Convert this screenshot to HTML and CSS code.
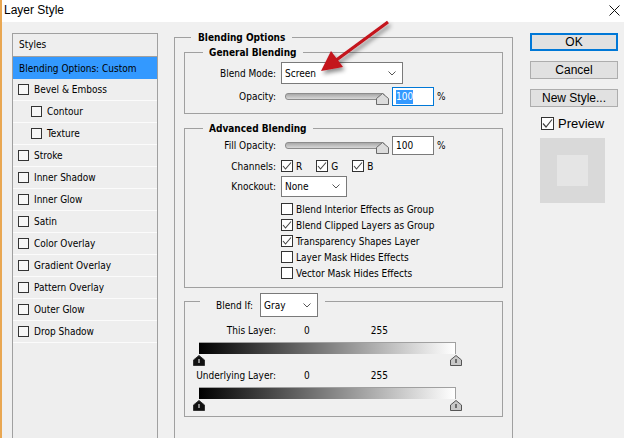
FILE: index.html
```html
<!DOCTYPE html>
<html lang="en">
<head>
  <meta charset="UTF-8">
  <title>Layer Style</title>
  <link rel="stylesheet" href="styles.css">
</head>
<body>
  <div class="window">

    <!-- Title bar -->
    <div class="titlebar">
      <span class="title">Layer Style</span>
      <svg class="close" width="11" height="11" viewBox="0 0 11 11">
        <path d="M0.5 0.5 L10.5 10.5 M10.5 0.5 L0.5 10.5" stroke="#111" stroke-width="1"/>
      </svg>
    </div>

    <div class="dialog">

      <!-- Styles list -->
      <div class="styles-panel">
        <div class="styles-head">Styles</div>
        <div class="style-row selected">Blending Options: Custom</div>
        <div class="style-row"><span class="box"></span>Bevel &amp; Emboss</div>
        <div class="style-row sub"><span class="box"></span>Contour</div>
        <div class="style-row sub"><span class="box"></span>Texture</div>
        <div class="style-row"><span class="box"></span>Stroke</div>
        <div class="style-row"><span class="box"></span>Inner Shadow</div>
        <div class="style-row"><span class="box"></span>Inner Glow</div>
        <div class="style-row"><span class="box"></span>Satin</div>
        <div class="style-row"><span class="box"></span>Color Overlay</div>
        <div class="style-row"><span class="box"></span>Gradient Overlay</div>
        <div class="style-row"><span class="box"></span>Pattern Overlay</div>
        <div class="style-row"><span class="box"></span>Outer Glow</div>
        <div class="style-row"><span class="box"></span>Drop Shadow</div>
      </div>

      <!-- Blending options -->
      <fieldset class="blending">
        <legend>Blending Options</legend>

        <fieldset class="group general">
          <legend>General Blending</legend>
          <div class="field mode-row">
            <label>Blend Mode:</label>
            <div class="select mode">
              <span>Screen</span>
              <svg class="chev" width="8" height="5" viewBox="0 0 8 5"><polyline points="0.5,0.5 4,4 7.5,0.5" fill="none" stroke="#555"/></svg>
            </div>
          </div>
          <div class="field opacity-row">
            <label>Opacity:</label>
            <div class="slider">
              <div class="track"></div>
              <svg class="thumb" width="13" height="12" viewBox="0 0 13 12"><path d="M6.5 0.5 L12.5 5.5 V11.5 H0.5 V5.5 Z" fill="#dcdcdc" stroke="#6a6a6a"/></svg>
            </div>
            <div class="num focus"><span class="sel">100</span></div>
            <span class="pct">%</span>
          </div>
        </fieldset>

        <fieldset class="group advanced">
          <legend>Advanced Blending</legend>
          <div class="field fill-row">
            <label>Fill Opacity:</label>
            <div class="slider">
              <div class="track"></div>
              <svg class="thumb" width="13" height="12" viewBox="0 0 13 12"><path d="M6.5 0.5 L12.5 5.5 V11.5 H0.5 V5.5 Z" fill="#dcdcdc" stroke="#6a6a6a"/></svg>
            </div>
            <div class="num"><span>100</span></div>
            <span class="pct">%</span>
          </div>
          <div class="field channels-row">
            <label>Channels:</label>
            <span class="cb on"><svg width="10" height="10" viewBox="0 0 10 10"><polyline points="1,5 3.5,8 9,1.5" fill="none" stroke="#444" stroke-width="1.1"/></svg></span><span class="chan">R</span>
            <span class="cb on"><svg width="10" height="10" viewBox="0 0 10 10"><polyline points="1,5 3.5,8 9,1.5" fill="none" stroke="#444" stroke-width="1.1"/></svg></span><span class="chan">G</span>
            <span class="cb on"><svg width="10" height="10" viewBox="0 0 10 10"><polyline points="1,5 3.5,8 9,1.5" fill="none" stroke="#444" stroke-width="1.1"/></svg></span><span class="chan">B</span>
          </div>
          <div class="field knockout-row">
            <label>Knockout:</label>
            <div class="select knockout">
              <span>None</span>
              <svg class="chev" width="8" height="5" viewBox="0 0 8 5"><polyline points="0.5,0.5 4,4 7.5,0.5" fill="none" stroke="#555"/></svg>
            </div>
          </div>
          <div class="checks">
            <div class="check"><span class="cb"></span>Blend Interior Effects as Group</div>
            <div class="check"><span class="cb on"><svg width="10" height="10" viewBox="0 0 10 10"><polyline points="1,5 3.5,8 9,1.5" fill="none" stroke="#444" stroke-width="1.1"/></svg></span>Blend Clipped Layers as Group</div>
            <div class="check"><span class="cb on"><svg width="10" height="10" viewBox="0 0 10 10"><polyline points="1,5 3.5,8 9,1.5" fill="none" stroke="#444" stroke-width="1.1"/></svg></span>Transparency Shapes Layer</div>
            <div class="check"><span class="cb"></span>Layer Mask Hides Effects</div>
            <div class="check"><span class="cb"></span>Vector Mask Hides Effects</div>
          </div>
        </fieldset>

        <div class="blend-if">
          <div class="blend-if-head">
            <span class="blend-if-label">Blend If:</span>
            <span class="select gray">
              <span>Gray</span>
              <svg class="chev" width="8" height="5" viewBox="0 0 8 5"><polyline points="0.5,0.5 4,4 7.5,0.5" fill="none" stroke="#555"/></svg>
            </span>
          </div>

          <div class="range-label first">
            <label>This Layer:</label><span class="lo">0</span><span class="hi">255</span>
          </div>
          <div class="ramp"></div>
          <div class="stops">
            <svg width="12" height="11" viewBox="0 0 12 11"><path d="M6 0.5 L11.5 5 V10.5 H0.5 V5 Z" fill="#111" stroke="#333"/><path d="M6 4 V8" stroke="#fff"/></svg>
            <svg width="12" height="11" viewBox="0 0 12 11"><path d="M6 0.5 L11.5 5 V10.5 H0.5 V5 Z" fill="#c8c8c8" stroke="#555"/><path d="M6 4 V8" stroke="#111"/></svg>
          </div>

          <div class="range-label">
            <label>Underlying Layer:</label><span class="lo">0</span><span class="hi">255</span>
          </div>
          <div class="ramp"></div>
          <div class="stops">
            <svg width="12" height="11" viewBox="0 0 12 11"><path d="M6 0.5 L11.5 5 V10.5 H0.5 V5 Z" fill="#111" stroke="#333"/><path d="M6 4 V8" stroke="#fff"/></svg>
            <svg width="12" height="11" viewBox="0 0 12 11"><path d="M6 0.5 L11.5 5 V10.5 H0.5 V5 Z" fill="#c8c8c8" stroke="#555"/><path d="M6 4 V8" stroke="#111"/></svg>
          </div>
        </div>
      </fieldset>

      <!-- Buttons -->
      <div class="actions">
        <div class="btn default">OK</div>
        <div class="btn">Cancel</div>
        <div class="btn">New Style...</div>
        <div class="preview-check">
          <span class="cb big on"><svg width="11" height="11" viewBox="0 0 11 11"><polyline points="1,5.5 4,9 10,1.5" fill="none" stroke="#444" stroke-width="1.2"/></svg></span>
          Preview
        </div>
        <div class="swatch"><div class="swatch-inner"></div></div>
      </div>
    </div>

    <!-- annotation arrow -->
    <svg class="arrow" width="624" height="438" viewBox="0 0 624 438">
      <defs>
        <filter id="shadow" x="-20%" y="-20%" width="160%" height="160%">
          <feDropShadow dx="2" dy="3" stdDeviation="2" flood-color="#000" flood-opacity="0.45"/>
        </filter>
      </defs>
      <g filter="url(#shadow)">
        <line x1="388" y1="22" x2="335" y2="61" stroke="#c4121b" stroke-width="3.2"/>
        <polygon points="321,71 331,51 343,67" fill="#c4121b"/>
      </g>
    </svg>
  </div>
</body>
</html>
```

FILE: styles.css
```css
body {
  margin: 0;
  font-family: "DejaVu Sans Condensed", "Liberation Sans", sans-serif;
  font-stretch: condensed;
  font-size: 10px;
  color: #000;
  background-color: #f0f0f0;
}

.window {
  position: relative;
  width: 624px;
  height: 438px;
  border-left: 2px solid #e9a752;
  box-sizing: border-box;
  overflow: hidden;
}

.titlebar {
  height: 22px;
  background-color: #fff;
  display: flex;
  align-items: center;
  justify-content: space-between;
  padding: 0 4px 2px 2px;
  box-sizing: border-box;
  font-family: "Liberation Sans", sans-serif;
  font-stretch: normal;
  font-size: 12px;
}

.dialog {
  display: flex;
  align-items: flex-start;
  height: 416px;
  padding-left: 10px;
}

/* styles list */
.styles-panel {
  flex: none;
  width: 146px;
  height: 420px;
  margin-top: 11px;
  box-sizing: border-box;
  border: 1px solid #a0a0a0;
  background-color: #eeeeee;
}

.styles-head {
  height: 22px;
  line-height: 22px;
  padding-left: 6px;
  border-bottom: 1px solid #a0a0a0;
}

.style-row {
  height: 21px;
  display: flex;
  align-items: center;
  padding-left: 5px;
  border-bottom: 1px solid #fbfbfb;
}

.style-row.selected {
  height: 22px;
  border-bottom: none;
  padding-left: 6px;
  background-color: #3399ff;
}

.style-row.sub {
  padding-left: 18px;
}

.box {
  width: 11px;
  height: 11px;
  margin-right: 5px;
  box-sizing: border-box;
  border: 1px solid #333;
  background-color: #f7f7f7;
}

/* fieldsets */
fieldset {
  margin: 0;
  min-width: 0;
  border: 1px solid #a0a0a0;
}

legend {
  line-height: 13px;
  font-weight: bold;
}

.blending {
  flex: none;
  width: 339px;
  margin: 9px 0 0 16px;
  padding: 0 9px 40px;
  box-sizing: border-box;
}

.blending > legend {
  padding: 0 7px;
  margin-left: 7px;
}

.group {
  padding: 0 0 7px;
}

.group > legend {
  padding: 0 6px;
  margin-left: 18px;
}

.general {
  margin-top: 2px;
}

.advanced {
  margin-top: 8px;
  padding-bottom: 6px;
}

.field {
  display: flex;
  align-items: center;
}

.field label {
  flex: none;
  width: 91px;
  margin-right: 5px;
  text-align: right;
}

.mode-row {
  margin-top: 3px;
  height: 22px;
}

.opacity-row {
  margin-top: 3px;
  height: 19px;
}

.select {
  display: flex;
  align-items: center;
  justify-content: space-between;
  box-sizing: border-box;
  border: 1px solid #7a7a7a;
  background-color: #fff;
  padding: 0 6px 0 3px;
  font-weight: normal;
}

.select.mode {
  width: 122px;
  height: 22px;
}

.slider {
  position: relative;
  display: flex;
  align-items: center;
  width: 104px;
  height: 19px;
  padding-left: 4px;
  margin-right: 7px;
  box-sizing: border-box;
}

.track {
  flex: 1;
  height: 5px;
  border: 1px solid #8c8c8c;
  border-radius: 3px;
  background: linear-gradient(#a8a8a8, #d8d8d8);
}

.thumb {
  position: absolute;
  left: 95px;
  top: 6px;
}

.num {
  display: flex;
  align-items: center;
  width: 42px;
  height: 19px;
  padding-left: 3px;
  box-sizing: border-box;
  border: 1px solid #7a7a7a;
  background-color: #fff;
}

.num.focus {
  border-color: #0078d7;
}

.sel {
  background-color: #3399ff;
  color: #fff;
  line-height: 14px;
}

.pct {
  margin-left: 3px;
}

.fill-row {
  margin-top: 1px;
  height: 19px;
}

.channels-row {
  margin-top: 4px;
  height: 14px;
}

.cb {
  flex: none;
  display: flex;
  align-items: center;
  justify-content: center;
  width: 12px;
  height: 12px;
  box-sizing: border-box;
  border: 1px solid #333;
  background-color: #fff;
}

.chan {
  margin: 0 14px 0 3px;
}

.knockout-row {
  margin-top: 3px;
  height: 21px;
}

.select.knockout {
  width: 66px;
  height: 21px;
}

.checks {
  margin-top: 4px;
  padding-left: 96px;
}

.check {
  display: flex;
  align-items: center;
  height: 16px;
}

.check .cb {
  margin-right: 3px;
}

/* blend if box: header sits on the top border */
.blend-if {
  margin-top: 13px;
  padding-bottom: 5px;
  border: 1px solid #a0a0a0;
}

.blend-if-head {
  display: flex;
  align-items: center;
  width: fit-content;
  height: 24px;
  margin: -9px 0 0 15px;
  padding: 0 7px 0 16px;
  background-color: #f0f0f0;
}

.blend-if-label {
  margin-right: 7px;
}

.select.gray {
  width: 58px;
  height: 24px;
}

.range-label {
  display: flex;
  line-height: 12px;
  margin-top: 4px;
}

.range-label.first {
  margin-top: 8px;
}

.range-label label {
  width: 91px;
  text-align: right;
}

.lo {
  margin-left: 28px;
}

.hi {
  margin-left: 61px;
}

.ramp {
  width: 256px;
  height: 11px;
  margin: 5px 0 0 14px;
  border: 1px solid #a0a0a0;
  border-left: none;
  border-bottom: none;
  background: linear-gradient(to right, #000, #fff);
}

.stops {
  display: flex;
  justify-content: space-between;
  width: 269px;
  height: 11px;
  margin: 1px 0 0 8px;
}

/* buttons */
.actions {
  flex: none;
  width: 88px;
  margin: 11px 0 0 17px;
  display: flex;
  flex-direction: column;
  gap: 10px;
  font-family: "Liberation Sans", sans-serif;
  font-stretch: normal;
  font-size: 12px;
}

.btn {
  height: 18px;
  line-height: 16px;
  text-align: center;
  box-sizing: border-box;
  border: 1px solid #adadad;
  background-color: #e1e1e1;
}

.btn.default {
  border: 2px solid #0078d7;
  line-height: 14px;
}

.preview-check {
  display: flex;
  align-items: center;
  padding-left: 11px;
  height: 13px;
  font-size: 13px;
}

.cb.big {
  width: 13px;
  height: 13px;
  margin-right: 4px;
}

.swatch {
  display: flex;
  align-items: center;
  justify-content: center;
  width: 65px;
  height: 65px;
  margin: -2px 0 0 10px;
  background-color: #d9d9d9;
}

.swatch-inner {
  width: 31px;
  height: 31px;
  background-color: #e5e5e5;
}

.arrow {
  position: absolute;
  left: -2px;
  top: 0;
  pointer-events: none;
}
```
